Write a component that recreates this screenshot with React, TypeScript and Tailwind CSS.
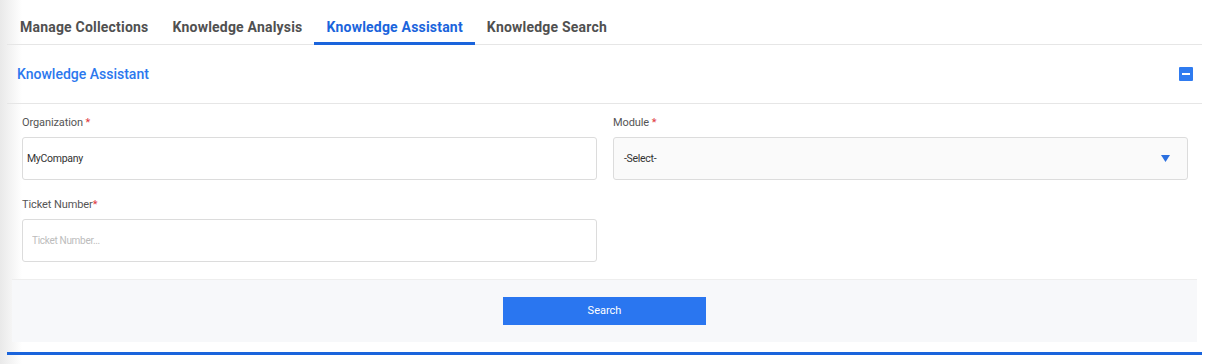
import { useState } from "react";

const tabs = ["Manage Collections", "Knowledge Analysis", "Knowledge Assistant", "Knowledge Search"];

function Label({ text, gap = true }: { text: string; gap?: boolean }) {
  return (
    <label className="block h-[14px] text-[11px] leading-[14px] tracking-[-0.1px] text-[#555]">
      {text}
      {gap ? " " : ""}
      <span className="text-[#e0383e]">*</span>
    </label>
  );
}

export default function App() {
  const [active, setActive] = useState("Knowledge Assistant");
  const [org, setOrg] = useState("MyCompany");
  const [ticket, setTicket] = useState("");

  return (
    <div className="min-h-[364px] w-[1210px] bg-[linear-gradient(to_right,#e9e9e9,#ffffff_22px)] font-['Roboto','Liberation_Sans',sans-serif]">
      <div className="ml-[7px] w-[1195px]">
        {/* tabs */}
        <div className="flex border-b border-[#e6e6e6] pt-[17px] pl-px">
          {tabs.map((t) => (
            <button
              key={t}
              onClick={() => setActive(t)}
              className={
                t === active
                  ? "-mb-px border-b-[3px] border-[#1a64dc] px-3 pb-[5px] text-[14px] leading-[20px] font-bold tracking-[0.2px] text-[#1a64dc]"
                  : "-mb-px border-b-[3px] border-transparent px-3 pb-[5px] text-[14px] leading-[20px] font-bold tracking-[0.2px] text-[#505050]"
              }
            >
              {t}
            </button>
          ))}
        </div>

        {/* panel header */}
        <div className="flex h-[59px] items-center justify-between border-b border-[#e6e6e6] pr-[9px] pl-[10px]">
          <h2 className="text-[14px] font-medium text-[#2b78ee]">Knowledge Assistant</h2>
          <button className="flex h-[14px] w-[14px] items-center justify-center rounded-[1px] bg-[#2f7bf0]">
            <span className="h-[2px] w-[8px] bg-white" />
          </button>
        </div>

        {/* form */}
        <div className="grid grid-cols-2 gap-x-4 pt-3 pr-[14px] pl-[15px]">
          <div>
            <Label text="Organization" />
            <input
              value={org}
              onChange={(e) => setOrg(e.target.value)}
              className="mt-[7px] h-[43px] w-full rounded-[3px] border border-[#dcdcdc] px-[4px] text-[10.5px] tracking-[-0.3px] text-[#333] outline-none"
            />
          </div>
          <div>
            <Label text="Module" />
            <div className="mt-[7px] flex h-[43px] w-full items-center justify-between rounded-[3px] border border-[#dcdcdc] bg-[#fafafa] pr-[17px] pl-[10px] text-[10.5px] tracking-[-0.3px] text-[#333]">
              <span>-Select-</span>
              <svg width="9" height="7" viewBox="0 0 9 7">
                <path d="M0 0h9L4.5 7z" fill="#2b70e0" />
              </svg>
            </div>
          </div>
          <div className="mt-[18px]">
            <Label text="Ticket Number" gap={false} />
            <input
              value={ticket}
              onChange={(e) => setTicket(e.target.value)}
              placeholder="Ticket Number..."
              className="mt-[7px] h-[43px] w-full rounded-[3px] border border-[#dcdcdc] px-[9px] text-[10px] tracking-[-0.3px] text-[#333] outline-none placeholder:text-[#bcbcbc]"
            />
          </div>
        </div>

        {/* footer */}
        <div className="mx-[5px] mt-[17px] flex h-[63px] items-center justify-center border-t border-[#eeeeee] bg-[#f7f8fa]">
          <button className="h-[28px] w-[203px] bg-[#2a76f0] text-[11px] text-white">Search</button>
        </div>

        <div className="mt-[10px] h-[3px] bg-[#1a64dc]" />
      </div>
    </div>
  );
}
